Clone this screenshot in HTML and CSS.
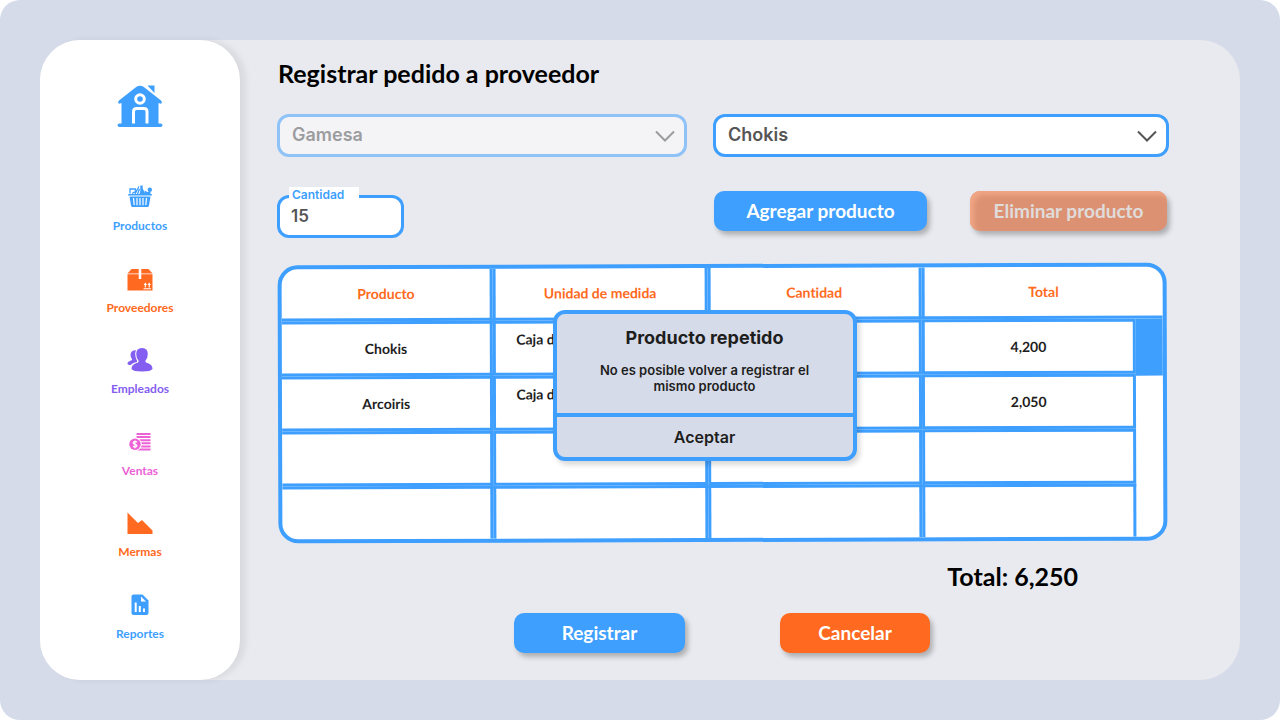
FILE: index.html
```html
<!DOCTYPE html>
<html lang="es">
<head>
<meta charset="utf-8">
<meta name="viewport" content="width=device-width, initial-scale=1">
<title>Registrar pedido a proveedor</title>
<link rel="stylesheet" href="styles.css">
</head>
<body>
<div class="page">
<div class="panel">
  <aside class="sidebar">
    <a class="logo" href="#" aria-label="Inicio">
      <svg width="46" height="44" viewBox="0 0 46 44" fill="#3e9fff">
        <path d="M2 15.500 19.500 1.800Q23 -.5 26.500 1.800L44 15.500Q46 18 43.500 18.800L41.500 18V38.500H43.500Q45.500 38.700 45.500 40.200 45.500 42 43.500 42H2.500Q.5 42 .5 40.200.5 38.700 2.500 38.500H4.500V18L2.500 18.800Q0 18 2 15.500Z"/>
        <path d="M30.500 .5H37.500V8Z"/>
        <circle cx="23" cy="14" r="4.300" fill="none" stroke="#fff" stroke-width="3"/>
        <path d="M16.500 38.500V26.500Q16.500 23.500 19.500 23.500H27Q30 23.500 30 26.500V38.500" fill="none" stroke="#fff" stroke-width="3"/>
      </svg>
    </a>
    <nav class="nav">
      <a class="item blue" href="#">
        <svg width="26" height="26" viewBox="0 0 26 26" fill="currentColor">
          <path d="M2 10H24Q25.500 10 25 11.500H1Q.5 10 2 10ZM2.500 12.500H23.500L22 21.500Q21.800 23 20.500 23H5.500Q4.200 23 4 21.500Z"/>
          <path d="M6.500 14 7.200 21M10 14V21.300M13 14V21.300M16 14V21.300M19.500 14 18.800 21" stroke="#fff" stroke-width="1.200"/>
          <path d="M3 9.500V5H8.500V7.500L5 9.500M8 10 12 2.500M10.500 10 12.500 5" fill="none" stroke="currentColor" stroke-width="1.300"/>
          <path d="M13.300 1.500H15.700V4.500L18.500 10H12.500L13.300 7Z"/><circle cx="22.800" cy="5.700" r="2.200"/><path d="M17.500 6.500 20.500 8 23.500 7.500V10H18Z"/>
        </svg><span>Productos</span></a>
      <a class="item orange" href="#">
        <svg width="26" height="26" viewBox="0 0 26 26" fill="currentColor">
          <path d="M4.500 3H11.700V7.500H.5ZM14.300 3H21.500L25.500 7.500H14.300ZM.5 8.200H11.700V13H14.300V8.200H25.500V24.500H.5Z"/>
          <path d="M16.500 22.800H24M18.300 21.500V18M22.200 21.500V18" stroke="#fff" stroke-width="1.100"/>
          <path d="M18.300 16.500 20 19H16.600ZM22.200 16.500 23.900 19H20.500Z" fill="#fff"/>
        </svg><span>Proveedores</span></a>
      <a class="item purple" href="#">
        <svg width="26" height="26" viewBox="0 0 26 26" fill="currentColor">
          <path d="M9 3.200Q7.500 6 8.500 9.500 9 12 10 13.500V15Q8 15.300 5.500 16.500 4 17.500 3.800 18 0 18 .5 16 .7 14.500 4 13.500 5.500 13 5 12 3.500 10.500 3.500 7.500 4 3 9 3.200Z"/>
          <path d="M15 1Q20.800 1 20.800 7 20.800 11 18.500 13.500 18 15.500 20.500 16 25.500 17.500 25.500 22 24 24.500 15 24.500 6 24.500 4.500 22 4.500 17.500 9.500 16 12 15.500 11.500 13.500 9.200 11 9.200 7 9.200 1 15 1Z"/>
        </svg><span>Empleados</span></a>
      <a class="item pink" href="#">
        <svg width="26" height="26" viewBox="0 0 26 26" fill="currentColor">
          <path d="M9.500 5H23.500M9.500 8.100H23.500M9.500 11.200H23.500M9.500 14.300H23.500M9.500 17.400H23.500M9.500 20.500H23.500" stroke="currentColor" stroke-width="2"/>
          <circle cx="8" cy="15.300" r="6.700" fill="#fff"/><circle cx="8" cy="15.300" r="5.700"/>
          <path d="M10 13.300Q8 11.600 6.500 13.100 5.500 14.800 8 15.300 10.700 16 9.500 17.500 8 18.800 6 17.300M8 11.500V19.300" fill="none" stroke="#fff" stroke-width="1.300"/>
        </svg><span>Ventas</span></a>
      <a class="item orange" href="#">
        <svg width="26" height="26" viewBox="0 0 26 26" fill="currentColor"><path d="M.5 2.500 11 13 15 10 25.500 20.500V24H.5Z"/></svg>
        <span>Mermas</span></a>
      <a class="item blue" href="#">
        <svg width="26" height="26" viewBox="0 0 26 26" fill="currentColor">
          <path d="M6.500 2.500H15.500L21.500 8.500V21Q21.500 23 19.500 23H6.500Q4.500 23 4.500 21V4.500Q4.500 2.500 6.500 2.500Z"/>
          <path d="M14 4.500V9.500H19Z" fill="#fff"/><path d="M8.700 10.500V20M12.800 14V20M17 16.500V20" stroke="#fff" stroke-width="2"/>
        </svg><span>Reportes</span></a>
    </nav>
  </aside>

  <main class="main">
    <h1 class="title">Registrar pedido a proveedor</h1>
    <form class="form">
      <div class="selects">
        <div class="select-box disabled">
          <select class="select" aria-label="Proveedor" disabled><option>Gamesa</option></select>
          <svg class="chevron" width="20" height="12" viewBox="0 0 20 12"><path d="M1 1.500 10 10.500 19 1.500"/></svg>
        </div>
        <div class="select-box">
          <select class="select" aria-label="Producto"><option>Chokis</option></select>
          <svg class="chevron" width="20" height="12" viewBox="0 0 20 12"><path d="M1 1.500 10 10.500 19 1.500"/></svg>
        </div>
      </div>
      <div class="actions">
        <div class="quantity">
          <label class="quantity-label" for="cantidad">Cantidad</label>
          <input class="quantity-input" id="cantidad" type="text" inputmode="numeric" value="15">
        </div>
        <div class="action-buttons">
          <button class="button add" type="button">Agregar producto</button>
          <button class="button remove" type="button" disabled>Eliminar producto</button>
        </div>
      </div>
    </form>

    <section class="order">
      <div class="sheet">
        <table class="table">
          <colgroup><col class="col-first"><col class="col"><col class="col"><col class="col"><col class="col-scroll"></colgroup>
          <thead><tr><th>Producto</th><th>Unidad de medida</th><th>Cantidad</th><th colspan="2">Total</th></tr></thead>
          <tbody>
            <tr><td>Chokis</td><td class="unit">Caja de</td><td></td><td>4,200</td><td class="scroll" rowspan="4"><div class="thumb"></div></td></tr>
            <tr><td>Arcoiris</td><td class="unit">Caja de</td><td></td><td>2,050</td></tr>
            <tr><td></td><td></td><td></td><td></td></tr>
            <tr><td></td><td></td><td></td><td></td></tr>
          </tbody>
        </table>
      </div>
      <div class="dialog" role="alertdialog" aria-labelledby="aviso" aria-describedby="detalle">
        <div class="dialog-body">
          <h2 class="dialog-title" id="aviso">Producto repetido</h2>
          <p class="dialog-text" id="detalle">No es posible volver a registrar el mismo producto</p>
        </div>
        <button class="dialog-button" type="button">Aceptar</button>
      </div>
    </section>

    <p class="total">Total: 6,250</p>
    <div class="footer">
      <button class="button register" type="button">Registrar</button>
      <button class="button cancel" type="button">Cancelar</button>
    </div>
  </main>
</div>
</div>
</body>
</html>
```
FILE: styles.css
```css
* { box-sizing: border-box; }
body { margin: 0; background: #fff; font-family: Lato, sans-serif; font-weight: 700; font-variant-ligatures: none; color: #000; }
button, input, select { font: inherit; }
h1, h2, p { margin: 0; }
.page { min-height: 100vh; padding: 40px; display: flex; background: #d6dbe9; border-radius: 20px; }
.panel { flex: 1; display: flex; background: #e9eaef; border-radius: 40px; }

.sidebar { width: 200px; flex: none; display: flex; flex-direction: column; align-items: center; padding: 45px 0 38px; background: #fff; border-radius: 40px; box-shadow: 6px 0 6px rgba(0, 0, 0, .07); }
.logo svg { display: block; }
.nav { flex: 1; display: flex; flex-direction: column; justify-content: space-between; margin-top: 55px; }
.item { display: flex; flex-direction: column; align-items: center; gap: 8px; font-size: 12px; line-height: 16px; text-decoration: none; }
.blue { color: #3e9fff; }
.orange { color: #ff6a20; }
.purple { color: #845ef1; }
.pink { color: #ec62d6; }

.main { flex: 1; min-width: 0; padding: 17px 71px 24px 37px; }
.title { font-size: 25px; line-height: 32px; padding-left: 1px; }
.selects { display: grid; grid-template-columns: 410fr 456fr; gap: 26px; margin-top: 25px; }
.select-box { position: relative; }
.select { appearance: none; display: block; width: 100%; height: 43px; padding: 0 40px 2px 12px; border: 3px solid #3e9fff; border-radius: 12px; background: #fff; color: #555; opacity: 1; font-family: Inter, sans-serif; font-size: 18px; font-weight: 600; }
.chevron { position: absolute; right: 12px; top: 16px; fill: none; stroke: #555; stroke-width: 2; pointer-events: none; }
.disabled { opacity: .52; }

.actions { display: grid; grid-template-columns: 410fr 456fr; gap: 26px; align-items: start; margin-top: 34px; }
.quantity { position: relative; width: 127px; padding-top: 4px; }
.quantity-input { display: block; width: 100%; height: 43px; padding: 0 11px 2px; border: 3px solid #3e9fff; border-radius: 12px; background: #fff; color: #555; font-family: Inter, sans-serif; font-size: 17px; font-weight: 600; }
.quantity-label { position: absolute; left: 12px; top: -4px; width: 70px; padding-left: 3px; background: #fff; color: #3e9fff; font-family: Inter, sans-serif; font-size: 12px; font-weight: 600; line-height: 16px; }
.action-buttons { display: flex; justify-content: space-between; padding: 0 2px 0 1px; }
.button { height: 40px; padding: 0 0 2px; border: 0; border-radius: 10px; color: #fff; font-size: 19px; box-shadow: 3px 4px 5px rgba(0, 0, 0, .25); }
.add { width: 213px; background: #3e9fff; }
.remove { width: 197px; background: #dc9272; color: #e0dcdc; box-shadow: 3px 4px 5px rgba(0, 0, 0, .25), inset 4px 4px 5px #f1a685; }

.order { position: relative; margin-top: 26px; }
.sheet { margin: 0 2px 0 1px; border: 4px solid #3e9fff; border-radius: 20px; background: #fff; overflow: hidden; transform: rotate(-0.18deg); }
.table { width: 100%; table-layout: fixed; border-collapse: separate; border-spacing: 0; font-size: 14px; line-height: 18px; }
.col-first { width: 24%; }
.col { width: 24.3%; }
.col-scroll { width: 3.1%; }
.table th, .table td { height: 55px; padding: 0; text-align: center; border: 3px solid #3e9fff; color: #1e1e1e; }
.table th { height: 52px; color: #ff6a20; border-top: 0; }
.table tr > :first-child { border-left: 0; }
.table th:last-child { border-right: 0; }
.table tbody tr:last-child td { height: 53px; border-bottom: 0; }
.table .unit { padding: 7px 20px 0; text-align: left; vertical-align: top; white-space: nowrap; }
.table .scroll { border: 0; vertical-align: top; }
.thumb { height: 57px; background: #3e9fff; }

.dialog { position: absolute; left: calc(31% - 1px); top: 46px; width: 304px; border: 4px solid #3e9fff; border-radius: 12px; background: #d6dbe9; overflow: hidden; text-align: center; color: #1e1e1e; font-family: Inter, sans-serif; font-weight: 600; box-shadow: 3px 4px 5px rgba(0, 0, 0, .15); }
.dialog-body { height: 99px; padding: 12px 36px 0; }
.dialog-title { font-size: 18px; font-weight: 700; line-height: 24px; }
.dialog-text { margin-top: 12px; font-size: 13px; line-height: 16px; }
.dialog-button { display: block; width: 100%; height: 44px; padding: 0; border: 0; border-top: 4px solid #3e9fff; background: transparent; color: #1e1e1e; font-size: 16px; }

.total { margin-top: 18px; padding-right: 91px; text-align: right; font-size: 25px; line-height: 32px; }
.footer { display: flex; justify-content: center; gap: 95px; margin-top: 21px; padding-right: 2px; }
.register { width: 171px; background: #3e9fff; }
.cancel { width: 150px; background: #ff6a20; }
```
